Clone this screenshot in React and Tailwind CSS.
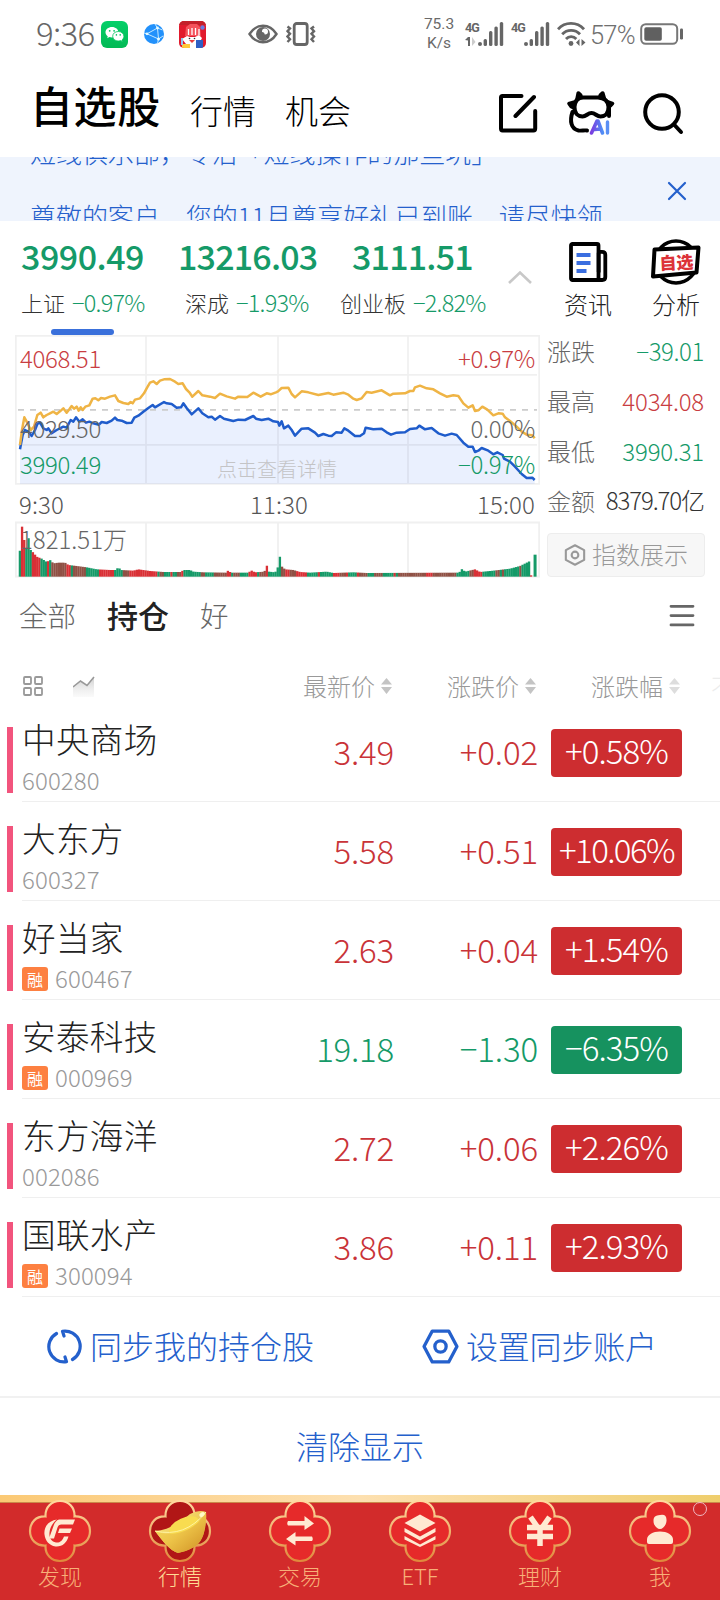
import React from "react";

const GREEN = "#159a68";

/* ---------- chart data (units: thirds of a pixel) ---------- */
const AVERAGE =
  "60,375 66,330 73,292 80,305 92,330 102,320 112,285 122,278 130,292 140,285 150,280 160,275 170,282 180,274 190,265 200,278 208,268 215,258 222,266 230,260 236,272 242,262 248,270 256,260 268,256 278,236 286,235 295,241 303,234 315,236 330,230 345,226 355,243 370,249 385,252 392,246 398,250 405,239 420,235 432,220 440,205 450,188 460,184 470,192 480,182 492,178 510,177 525,185 535,192 548,190 558,207 568,217 577,230 595,213 607,226 630,230 645,234 660,221 680,229 705,236 715,230 742,231 760,218 782,230 800,220 812,223 828,217 834,214 845,204 865,203 875,222 885,232 905,214 925,217 955,225 985,219 1000,224 1030,218 1045,224 1060,236 1070,240 1085,235 1100,216 1115,218 1145,211 1170,226 1180,221 1215,220 1230,213 1240,213 1245,202 1260,197 1280,205 1300,208 1320,220 1340,230 1360,226 1375,228 1390,250 1405,263 1418,256 1425,273 1435,271 1447,260 1462,269 1480,286 1495,280 1508,281 1515,292 1530,303 1550,320 1565,335 1580,344 1597,346 1604,355";
const PRICE =
  "60,388 68,345 75,330 85,335 95,348 105,330 112,312 120,308 130,325 140,330 145,325 155,340 170,330 190,320 200,323 212,300 220,305 228,292 238,305 248,298 258,308 268,305 280,310 297,314 305,306 320,309 335,302 345,293 352,300 365,302 380,309 395,308 403,293 415,287 430,275 445,264 458,255 465,262 492,246 500,250 515,252 530,263 543,262 550,250 560,264 575,283 595,265 607,280 625,292 635,290 645,299 660,288 672,296 700,303 715,299 735,300 760,288 768,296 785,300 805,296 820,304 834,306 838,317 845,304 852,325 865,317 875,330 885,347 905,326 925,325 945,338 955,348 970,342 985,347 995,348 1008,337 1025,338 1033,325 1045,332 1065,348 1080,348 1092,340 1097,323 1120,328 1145,326 1160,337 1173,344 1190,338 1215,337 1230,327 1250,325 1258,317 1275,328 1295,324 1315,340 1335,347 1355,341 1370,345 1390,368 1405,380 1418,380 1425,396 1435,392 1445,384 1465,392 1480,403 1492,397 1508,405 1512,416 1530,425 1545,440 1565,462 1580,474 1597,473 1604,480";

const ENVELOPE = [
  [57, 50], [66, 150], [73, 107], [79, 85], [85, 118], [92, 80], [100, 72], [110, 60], [125, 54], [140, 44],
  [150, 50], [160, 40], [175, 42], [195, 42], [205, 35], [230, 32], [260, 28], [290, 22], [330, 20], [348, 20],
  [355, 29], [362, 20], [400, 18], [415, 22], [450, 17], [490, 14], [543, 14], [550, 20], [570, 20], [580, 15],
  [610, 13], [678, 12], [685, 19], [692, 12], [743, 12], [755, 18], [765, 13], [793, 15], [801, 34], [807, 15],
  [825, 13], [832, 22], [839, 62], [846, 30], [855, 22], [880, 20], [900, 14], [930, 12], [980, 15], [1000, 11],
  [1060, 13], [1100, 11], [1377, 12], [1386, 23], [1395, 15], [1425, 22], [1440, 14], [1480, 18], [1530, 24],
  [1560, 32], [1588, 46],
];
const heightAt = (x) => {
  for (let i = 1; i < ENVELOPE.length; i++) {
    const [x1, h1] = ENVELOPE[i];
    const [x0, h0] = ENVELOPE[i - 1];
    if (x <= x1) return h0 + ((h1 - h0) * (x - x0)) / (x1 - x0);
  }
  return 46;
};
const RED_RANGES = [
  [62, 78], [96, 120], [142, 146], [200, 215], [300, 345], [388, 475], [512, 520], [545, 552], [680, 690],
  [745, 770], [796, 806], [858, 870], [888, 922], [1000, 1015], [1070, 1078], [1180, 1190], [1280, 1295],
  [1420, 1445], [955, 962], [1038, 1045],
];
const MIXED_RANGES = [
  [155, 198], [218, 255], [370, 386], [478, 492], [528, 543], [600, 615], [640, 680], [700, 722], [780, 795],
  [843, 857], [870, 886], [1015, 1036], [1080, 1100], [1125, 1145], [1195, 1275], [1300, 1370], [1410, 1420],
  [1484, 1496], [1505, 1512], [1558, 1566],
];
const within = (ranges, x) => ranges.some(([a, b]) => x >= a && x <= b);
const BARS = [];
for (let x = 59.5; x < 1590; x += 6.5) {
  BARS.push({ x, h: heightAt(x), c: within(RED_RANGES, x) ? "#d93036" : within(MIXED_RANGES, x) ? "#8f5145" : GREEN });
}
BARS.push({ x: 1593, h: 4, c: "#d93036" }, { x: 1604, h: 66, c: GREEN });

const STOCKS = [
  { name: "中央商场", code: "600280", price: "3.49", diff: "+0.02", pct: "+0.58%" },
  { name: "大东方", code: "600327", price: "5.58", diff: "+0.51", pct: "+10.06%", wide: true },
  { name: "好当家", code: "600467", price: "2.63", diff: "+0.04", pct: "+1.54%", margin: true },
  { name: "安泰科技", code: "000969", price: "19.18", diff: "−1.30", pct: "−6.35%", margin: true, down: true },
  { name: "东方海洋", code: "002086", price: "2.72", diff: "+0.06", pct: "+2.26%" },
  { name: "国联水产", code: "300094", price: "3.86", diff: "+0.11", pct: "+2.93%", margin: true },
];

/* ---------- status bar ---------- */
function Signal() {
  return (
    <svg width="26" height="24" viewBox="0 0 26 24" fill="#666">
      <circle cx="2" cy="22" r="2" />
      <rect x="5.6" y="17" width="3.4" height="7" rx="1.5" />
      <rect x="11" y="9" width="3.4" height="15" rx="1.5" />
      <rect x="16.4" y="4.5" width="3.4" height="19.5" rx="1.5" />
      <rect x="21.8" y="0" width="3.4" height="24" rx="1.5" />
    </svg>
  );
}

function StatusBar() {
  return (
    <div className="flex h-[68px] shrink-0 items-center pl-[36px] text-[#666]">
      <div className="-mt-[4px] w-[65px] shrink-0 whitespace-nowrap text-[33px] font-light leading-[40px] tracking-[-0.7px]">9:36</div>
      <svg width="27" height="27" viewBox="0 0 27 27">
        <defs>
          <linearGradient id="wx" x1="0" y1="0" x2="0" y2="1">
            <stop offset="0" stopColor="#05d069" />
            <stop offset="1" stopColor="#03b955" />
          </linearGradient>
        </defs>
        <rect width="27" height="27" rx="6" fill="url(#wx)" />
        <path d="M11 6c-3.700 0-6.500 2.300-6.500 5.300 0 1.700.9 3.100 2.300 4.100l-.6 1.900 2.200-1.200c.8.200 1.600.4 2.600.4 3.600 0 6.400-2.300 6.400-5.200S14.600 6 11 6z" fill="#fff" />
        <path d="M17.300 10.500c-3.200 0-5.600 2-5.600 4.700s2.400 4.800 5.600 4.800c.8 0 1.500-.1 2.200-.4l1.900 1.100-.5-1.700c1.200-.9 2-2.200 2-3.700 0-2.700-2.500-4.800-5.600-4.800z" fill="#fff" stroke="#04c35e" strokeWidth=".8" />
        <g fill="#04c35e"><circle cx="8.700" cy="9.800" r=".9" /><circle cx="13.100" cy="9.800" r=".9" /><circle cx="15.400" cy="13.900" r=".8" /><circle cx="19.200" cy="13.900" r=".8" /></g>
      </svg>
      <svg width="20" height="20" viewBox="0 0 20 20" className="ml-[16px]">
        <circle cx="10" cy="10" r="10" fill="#2291fb" />
        <path d="M13.500 4L3 9.800 14.500 15zM13.500 4L11 0M14.500 15l4.500-3M14.500 15l-1 4.500M3 9.800L0 9M13.500 4l5 2" fill="none" stroke="#c4e8ff" strokeWidth="1" />
        <g fill="#e6fbff"><circle cx="13.500" cy="4" r="1.400" /><circle cx="3" cy="9.800" r="1.400" /><circle cx="14.500" cy="15" r="1.500" /></g>
      </svg>
      <svg width="27" height="27" viewBox="0 0 27 27" className="ml-[15px]">
        <defs><clipPath id="appclip"><rect width="27" height="27" rx="5" /></clipPath></defs>
        <g clipPath="url(#appclip)">
          <rect width="27" height="27" fill="#e11a2d" />
          <path d="M0 0h27v4H0z" fill="#c3202a" />
          <path d="M6 15l1-9 4-3h7l3 3 1 9z" fill="#f4525b" />
          <path d="M9.500 8v6M13 7v7M16.500 7v7M20 8v6" stroke="#fff" strokeWidth="1.300" />
          <circle cx="23.500" cy="6.500" r="2.200" fill="#6a7be0" />
          <path d="M3 18l5-3 3 1h5l4-2 3 3-3 6H7z" fill="#fff" />
          <path d="M10 19h6l-3 3z" fill="#e53b3b" />
          <circle cx="10.500" cy="17.500" r=".8" fill="#333" /><circle cx="15.500" cy="17.500" r=".8" fill="#333" />
          <rect x="3" y="23" width="8" height="4" fill="#ffc93a" />
          <rect x="11" y="23" width="6" height="4" fill="#fff" />
          <rect x="17" y="19" width="7" height="8" fill="#2f5fc4" />
          <rect x="2" y="17" width="2" height="7" fill="#8fc7ee" />
        </g>
      </svg>
      <svg width="30" height="20" viewBox="0 0 30 20" className="ml-[42px]">
        <path d="M1.500 10C5 4.500 9.700 1.800 15 1.800S25 4.500 28.500 10C25 15.500 20.300 18.200 15 18.200S5 15.500 1.500 10z" fill="none" stroke="#666" strokeWidth="2.400" />
        <circle cx="15" cy="10" r="7" fill="#666" />
        <circle cx="17" cy="7.600" r="3" fill="#fff" />
        <circle cx="14" cy="10.500" r="2.600" fill="#666" />
      </svg>
      <svg width="30" height="24" viewBox="0 0 30 24" className="ml-[8px]" fill="none" stroke="#666">
        <rect x="8.200" y="1.500" width="13" height="21" rx="2.500" strokeWidth="2.800" />
        <path d="M1.500 4.500L4 6.500 1.500 9.200 4 11.800 1.500 14.500 4 17.200 1.500 20M28 4.500L25.500 6.500 28 9.200 25.500 11.800 28 14.500 25.500 17.200 28 20" strokeWidth="2.400" />
      </svg>
      <div className="ml-[107px] w-[32px] text-center text-[15.5px] leading-[19px] text-[#6a6a6a]">
        <div className="font-['Roboto','Noto_Sans_CJK_SC',sans-serif]">75.3</div>
        <div className="font-['Roboto','Noto_Sans_CJK_SC',sans-serif]">K/s</div>
      </div>
      <div className="ml-[10px] flex items-start">
        <div className="w-[13px] font-['Roboto',sans-serif] text-[12.5px] font-bold leading-[12px] tracking-[-1px]">
          4G
          <svg width="11" height="9" viewBox="0 0 11 9" className="mt-[3px]">
            <path d="M0 3l3-3h2v9H3V3.500z" fill="#666" />
            <path d="M7 0v9l3.500-4z" fill="#ccc" />
          </svg>
        </div>
        <Signal />
      </div>
      <div className="ml-[7px] flex items-start">
        <div className="w-[13px] font-['Roboto',sans-serif] text-[12.5px] font-bold leading-[12px] tracking-[-1px]">4G</div>
        <Signal />
      </div>
      <svg width="29" height="25" viewBox="0 0 29 25" className="ml-[7px] shrink-0" fill="none" stroke="#666" strokeWidth="2.800">
        <path d="M1 7.200C8-.5 20-.5 27 7.200M5.200 12.200c4.800-5.200 13-5.200 17.800 0M9 17c2.900-3.200 7.400-3.200 10.300 0" />
        <circle cx="14" cy="21.500" r="2.400" fill="#666" stroke="none" />
        <path d="M22.500 17v7l-3.500-3.500zM24.500 17v7l4-3.500z" fill="#666" stroke="none" />
      </svg>
      <div className="ml-[4px] mt-[2px] w-[50px] shrink-0 whitespace-nowrap font-['Roboto','Noto_Sans_CJK_SC',sans-serif] text-[25.5px] font-light leading-[30px] tracking-[-0.8px] text-[#707070]">57%</div>
      <svg width="44" height="22" viewBox="0 0 44 22" className="shrink-0">
        <rect x="1.200" y="1.200" width="36" height="19.600" rx="4.500" fill="none" stroke="#777" strokeWidth="2" />
        <rect x="4.300" y="4.300" width="17.500" height="13.400" rx="1.800" fill="#606060" />
        <rect x="40" y="5.500" width="3" height="11" rx="1.200" fill="#666" />
      </svg>
    </div>
  );
}

/* ---------- header ---------- */
function Header() {
  return (
    <div className="flex h-[89px] shrink-0 items-start pl-[32px] text-black">
      <div className="w-[158px] shrink-0 whitespace-nowrap pt-[5px] text-[43px] font-medium leading-[62px] tracking-[0.6px]"><span className="-ml-[2px]">自选股</span></div>
      <div className="w-[95px] whitespace-nowrap pt-[12px] text-[33px] font-light leading-[60px]">行情</div>
      <div className="w-[213px] whitespace-nowrap pt-[12px] text-[33px] font-light leading-[60px]">机会</div>
      <svg width="40" height="40" viewBox="0 0 40 40" className="mt-[25px]" fill="none" stroke="#000" strokeWidth="4" strokeLinecap="round" strokeLinejoin="round">
        <path d="M23.500 3H4.500Q3 3 3 4.500v31Q3 37.500 4.500 37.500h31q1.700 0 1.700-2V18M17.500 23L36 4" />
      </svg>
      <svg width="50" height="46" viewBox="0 0 50 46" className="ml-[28px] mt-[22px]" fill="none">
        <defs>
          <linearGradient id="ai" x1="0" y1="0" x2="1" y2="0">
            <stop offset="0" stopColor="#7a3fe0" />
            <stop offset="1" stopColor="#4f8df5" />
          </linearGradient>
        </defs>
        <path d="M9 10L10.500 2.500Q11.500.5 13.500 1.500q2.500 1.500 3.500 5h15q1-3.500 3.500-5 2-1 3 1L40.500 9.500 47.500 12q1.500 1 .5 2.500-2 3-6 5H7Q3 18 1.500 14.500.500 13 2 12z" fill="#000" />
        <path d="M17 7.500h15Q42 8 42.500 17c0 8-5 9.500-8 9.500-4 0-5-3.500-9-3.500s-5 3.500-9 3.500c-4 0-8-2.500-8-9.500Q9 8 17 7.500z" fill="#fff" stroke="#000" strokeWidth="4" />
        <path d="M6.500 22c-3 9-1.500 17 6 18.500 3 .5 6-.5 8.500 0M43 17v9" stroke="#000" strokeWidth="4" strokeLinecap="round" />
        <path d="M25.500 43l5.500-12h1L36.500 43M28.500 39.500l6-.5" stroke="url(#ai)" strokeWidth="3.600" strokeLinejoin="round" strokeLinecap="round" />
        <path d="M41.500 32v11" stroke="#5a8ff5" strokeWidth="3.400" strokeLinecap="round" />
      </svg>
      <svg width="42" height="43" viewBox="0 0 42 43" className="ml-[26px] mt-[24px]" fill="none" stroke="#000" strokeWidth="4" strokeLinecap="round">
        <circle cx="20" cy="20" r="16.800" />
        <path d="M32 32.500l7 7.500" />
      </svg>
    </div>
  );
}

function Banner() {
  return (
    <div className="flex h-[64px] shrink-0 overflow-hidden bg-[#eff4fd] pl-[30px] text-[26px] font-light leading-[64px] text-[#2460cc]">
      <div className="-mt-[37px] w-[634px] whitespace-nowrap">
        <div className="tracking-[-0.05px]">短线俱乐部，专治「短线操作的那些坑」</div>
        <div className="tracking-[-0.05px]">尊敬的客户，您的11月尊享好礼已到账，请尽快领</div>
      </div>
      <svg width="22" height="22" viewBox="0 0 22 22" className="ml-[2px] mt-[23px]" stroke="#2460cc" strokeWidth="2.200" strokeLinecap="round">
        <path d="M3 3l16 16M19 3L3 19" />
      </svg>
    </div>
  );
}

/* ---------- indices ---------- */
function IndexCell({ value, label, pct, box, valueCls }) {
  return (
    <div className={"shrink-0 " + box}>
      <div className={"whitespace-nowrap text-[34px] font-medium leading-[40px] text-[#159a68] " + valueCls}>{value}</div>
      <div className="mt-[10px] flex items-center whitespace-nowrap text-[22px] font-light leading-[32px] text-[#333]">
        {label}
        <span className="ml-[7px] text-[23.5px] tracking-[-0.8px] text-[#159a68]">{pct}</span>
      </div>
    </div>
  );
}

function Indices() {
  return (
    <div className="flex h-[114px] shrink-0 flex-col">
      <div className="flex h-[108px] items-start pt-[15px]">
        <IndexCell value="3990.49" label="上证" pct="−0.97%" box="w-[165px] pl-[21px]" valueCls="tracking-[-0.5px]" />
        <IndexCell value="13216.03" label="深成" pct="−1.93%" box="w-[155px] pl-[20px]" valueCls="-ml-[7px] tracking-[-0.8px]" />
        <IndexCell value="3111.51" label="创业板" pct="−2.82%" box="w-[188px] pl-[20px]" valueCls="ml-[12px] tracking-[-0.8px]" />
        <svg width="24" height="14" viewBox="0 0 24 14" className="mt-[34px] shrink-0" fill="none" stroke="#c8c8c8" strokeWidth="2.600">
          <path d="M1 13L12 2.500 23 13" />
        </svg>
        <div className="ml-[32px] flex w-[48px] flex-col items-center">
          <svg width="40" height="42" viewBox="0 0 40 42" className="mt-[5px]" fill="none" stroke="#000" strokeWidth="3.800">
            <path d="M31 10.800h3q3.300 0 3.300 3V36q0 3-3 3H24" />
            <rect x="3" y="3" width="27.500" height="36" rx="1.500" fill="#fff" />
            <path d="M30.700 12v18.500" strokeLinecap="round" />
            <path d="M8.500 14h14M8.500 22h14M8.500 30h10" stroke="#3a6ee0" strokeWidth="4" />
          </svg>
          <div className="mt-[5px] whitespace-nowrap text-[24px] font-light leading-[32px] text-[#222]">资讯</div>
        </div>
        <div className="ml-[38px] flex w-[52px] flex-col items-center">
          <div className="relative mt-[3px] h-[49px] w-[50px]">
            <svg width="50" height="46" viewBox="0 0 50 46" className="absolute inset-0" fill="none" stroke="#000">
              <circle cx="25" cy="23" r="21" strokeWidth="3.500" />
              <path d="M3.500 10.500L47.500 8.500 45.500 33.500 2 37.500z" fill="#fff" strokeWidth="4" strokeLinejoin="round" />
            </svg>
            <div className="relative -rotate-3 pt-[13px] text-center text-[17px] font-black leading-[20px] text-[#dc3238]">自选</div>
          </div>
          <div className="whitespace-nowrap text-[24px] font-light leading-[32px] text-[#222]">分析</div>
        </div>
      </div>
      <div className="ml-[51px] h-[6px] w-[63px] rounded-full bg-[#3a70db]" />
    </div>
  );
}

const chartText = "absolute whitespace-nowrap text-[24px] font-light leading-[30px] tracking-[-0.3px] ";

function Charts() {
  return (
    <div className="flex w-[525px] shrink-0 flex-col">
      <div className="relative h-[151px]">
        <svg width="525" height="151" viewBox="45 45 1575 453" className="absolute inset-0" fill="none">
          <polygon points={PRICE + " 1604,491 60,491"} fill="#eaf0fe" />
          <path d="M47.500 47.500H1617.500V491.500H47.500zM54 164.500H1611M54 374.500H1611M438 48V491M834 48V491M1224 48V491" stroke="#000" strokeOpacity=".06" strokeWidth="5.500" />
          <path d="M54 269.500H1611" stroke="#ccc" strokeWidth="5" strokeDasharray="18 18" />
        </svg>
        <svg width="525" height="151" viewBox="45 45 1575 453" className="absolute inset-0" fill="none" strokeWidth="7.500" strokeLinejoin="round">
          <polyline points={PRICE} stroke="#1f5ccb" />
          <polyline points={AVERAGE} stroke="#efb445" />
        </svg>
        <span className={chartText + "left-[5px] top-[8px] text-[#c93d42]"}>4068.51</span>
        <span className={chartText + "left-[5px] top-[78px] text-[#666]"}>4029.50</span>
        <span className={chartText + "left-[5px] top-[114px] text-[#159a68]"}>3990.49</span>
        <span className={chartText + "right-[5px] top-[8px] text-[#c93d42]"}>+0.97%</span>
        <span className={chartText + "right-[5px] top-[78px] text-[#666]"}>0.00%</span>
        <span className={chartText + "right-[5px] top-[114px] text-[#159a68]"}>−0.97%</span>
        <span className="absolute left-[202px] top-[119px] whitespace-nowrap text-[20px] font-light leading-[30px] text-[#c4c4c6]">点击查看详情</span>
      </div>
      <div className="flex h-[36px] items-center justify-between pl-[4px] pr-[5px] pt-[1px] text-[24px] font-light tracking-[0.1px] text-[#555]">
        <span>9:30</span>
        <span className="ml-[17px]">11:30</span>
        <span>15:00</span>
      </div>
      <div className="relative h-[57px]">
        <svg width="525" height="57" viewBox="45 604 1575 171" className="absolute inset-0">
          <path d="M47.500 608.500H1617.500V770.500H47.500zM438 608V770M834 608V770M1224 608V770" fill="none" stroke="#f0f0f0" strokeWidth="5.500" />
          {BARS.map((b, i) => (
            <rect key={i} x={b.x - 3.3} y={771 - b.h} width={b.x > 1600 ? 9 : 7} height={b.h} fill={b.c} />
          ))}
        </svg>
        <span className="absolute left-[5px] top-[3px] whitespace-nowrap text-[24px] font-light leading-[30px] text-[#666]">1821.51万</span>
      </div>
    </div>
  );
}

function Stat({ label, value, cls }) {
  return (
    <div className="flex h-[50px] items-center justify-between whitespace-nowrap text-[24px] font-light leading-[30px] text-[#666]">
      <span>{label}</span>
      <span className={cls}>{value}</span>
    </div>
  );
}

function Hexagon({ size, stroke, width, cls }) {
  return (
    <svg width={size} height={size} viewBox="0 0 36 36" className={cls} fill="none" stroke={stroke} strokeWidth={width} strokeLinejoin="round">
      <path d="M10 3h16l8 15-8 15H10L2 18z" />
      <circle cx="18" cy="18" r="5.500" />
    </svg>
  );
}

function MarketPanel() {
  return (
    <div className="flex h-[243px] shrink-0 pl-[15px]">
      <Charts />
      <div className="ml-[7px] flex w-[158px] flex-col">
        <div className="-mt-[9px] flex flex-col pr-[1px]">
          <Stat label="涨跌" value="−39.01" cls="tracking-[-0.4px] text-[#159a68]" />
          <Stat label="最高" value="4034.08" cls="tracking-[-0.2px] text-[#c93d42]" />
          <Stat label="最低" value="3990.31" cls="tracking-[-0.2px] text-[#159a68]" />
          <Stat label="金额" value="8379.70亿" cls="-mt-[2px] tracking-[-1.1px] text-[#333]" />
        </div>
        <div className="mt-[7px] flex h-[44px] items-center justify-center rounded-[4px] border border-[#ededed] bg-[#f7f7f7] pb-[2px] text-[24px] font-light text-[#999]">
          <Hexagon size={22} stroke="#999" width={3.4} cls="mr-[6px] mt-[1px] rotate-90" />
          指数展示
        </div>
      </div>
    </div>
  );
}

/* ---------- watch list ---------- */
function Tabs() {
  return (
    <div className="flex h-[78px] shrink-0 items-center whitespace-nowrap pb-[3px] pl-[19px] pr-[25px] text-[#666]">
      <span className="w-[88px] text-[28.5px] font-light">全部</span>
      <span className="w-[93px] text-[31px] font-medium text-[#222]">持仓</span>
      <span className="text-[28.5px] font-light">好</span>
      <svg width="26" height="24" viewBox="0 0 26 24" className="ml-auto mt-[1px]" stroke="#666" strokeWidth="2.800" strokeLinecap="round">
        <path d="M2 2.300h22M2 11.600h22M2 20.900h22" />
      </svg>
    </div>
  );
}

function Sort({ faded }) {
  return (
    <svg width="11" height="16" viewBox="0 0 11 16" className="ml-[6px] shrink-0" fill={faded ? "#ddd" : "#c4c4c4"}>
      <path d="M5.500 0L11 6.500H0zM5.500 16L11 9H0z" />
    </svg>
  );
}

function ColumnHeads() {
  return (
    <div className="flex h-[47px] shrink-0 items-center overflow-hidden whitespace-nowrap pl-[23px] pt-[13px] text-[24px] font-light leading-[30px] text-[#999]">
      <svg width="20" height="20" viewBox="0 0 20 20" className="shrink-0" fill="none" stroke="#999" strokeWidth="1.800">
        <rect x="1" y="1" width="7" height="7" rx="1" /><rect x="12" y="1" width="7" height="7" rx="1" />
        <rect x="1" y="12" width="7" height="7" rx="1" /><rect x="12" y="12" width="7" height="7" rx="1" />
      </svg>
      <svg width="22" height="21" viewBox="0 0 22 21" className="ml-[30px] shrink-0">
        <defs>
          <linearGradient id="fade" x1="0" y1="0" x2="0" y2="1">
            <stop offset="0" stopColor="#bbb" stopOpacity=".7" />
            <stop offset="1" stopColor="#ddd" stopOpacity=".15" />
          </linearGradient>
        </defs>
        <path d="M0 11L7.500 5l6.500 4.500L21 1v20H0z" fill="url(#fade)" />
        <path d="M0 11L7.500 5l6.500 4.500L21 1" fill="none" stroke="#999" strokeWidth="1.600" />
      </svg>
      <div className="flex w-[297px] shrink-0 items-center justify-end">最新价<Sort /></div>
      <div className="flex w-[144px] shrink-0 items-center justify-end">涨跌价<Sort /></div>
      <div className="flex w-[144px] shrink-0 items-center justify-end">涨跌幅<Sort faded /></div>
      <div className="ml-[31px] w-[24px] shrink-0 text-[#ececec]">不</div>
    </div>
  );
}

function StockRow({ s }) {
  return (
    <div className="flex h-[99px] shrink-0 pl-[7px]">
      <div className="mt-[24px] h-[66px] w-[6px] bg-[#f2547d]" />
      <div className="ml-[9px] flex flex-1 items-start border-b border-[#efefef]">
        <div className="w-[200px] whitespace-nowrap pt-[13px]">
          <div className="text-[33.6px] font-light leading-[46px] tracking-[0.3px] text-[#222]">{s.name}</div>
          <div className="mt-[3px] flex items-center text-[24px] font-light leading-[30px] tracking-[0.1px] text-[#999]">
            {s.margin && (
              <span className="mr-[7px] mt-[1px] flex h-[24px] w-[26px] items-center justify-center rounded-[3px] bg-[#fd8041] text-[16px] font-normal leading-[22px] tracking-normal text-white">融</span>
            )}
            {s.code}
          </div>
        </div>
        <div className={"mt-[25px] w-[172px] text-right text-[33px] font-light leading-[46px] tracking-[-0.2px] " + (s.down ? "text-[#159a68]" : "text-[#c93338]")}>{s.price}</div>
        <div className={"mt-[25px] w-[144px] text-right text-[33px] font-light leading-[46px] tracking-[-0.1px] " + (s.down ? "text-[#159a68]" : "text-[#c93338]")}>{s.diff}</div>
        <div className={"ml-[13px] mt-[26px] h-[48px] w-[131px] whitespace-nowrap rounded-[4px] text-center text-[33px] font-light leading-[43px] text-white " + (s.wide ? "tracking-[-1.6px] " : "tracking-[-0.9px] ") + (s.down ? "bg-[#16925f]" : "bg-[#cd2d30]")}>{s.pct}</div>
      </div>
    </div>
  );
}

function Actions() {
  return (
    <div className="flex h-[198px] shrink-0 flex-col whitespace-nowrap text-[32px] font-light text-[#2460cc]">
      <div className="flex h-[101px] shrink-0 items-center border-b-2 border-[#f1f1f1] pl-[47px]">
        <svg width="35" height="35" viewBox="0 0 35 35" fill="none" stroke="#2460cc" strokeWidth="3.200" strokeLinecap="round" strokeLinejoin="round">
          <path d="M9.500 4.500A15.200 15.200 0 0 0 19.500 32.700L18 28" />
          <path d="M25.500 30.500A15.200 15.200 0 0 0 15.500 2.300L17 7" />
        </svg>
        <span className="-mt-[4px] ml-[8px] w-[332px]">同步我的持仓股</span>
        <Hexagon size={37} stroke="#2460cc" width={3.2} cls="" />
        <span className="-mt-[4px] ml-[7px] tracking-[-0.2px]">设置同步账户</span>
      </div>
      <div className="flex h-[97px] items-center justify-center pb-[3px]">清除显示</div>
    </div>
  );
}

/* ---------- bottom navigation ---------- */
const GLYPHS = {
  discover: (
    <g fill="#ffead2">
      <path d="M29 20.500c-8 1-13.500 7-12.500 15 .7 6 4.500 11 11 12 7 .5 11-3.500 13-10h-4.500c-1.500 4-4 6.500-8 6-5-1-7-5-6.500-10 .5-5.500 3.500-10 7.500-13z" />
      <path d="M31 20.500h16l-2 5H33q-2.500 0-3.500 3L26 39.500h-5L25.500 27q1.700-5.500 5.500-6.500zM31.500 29.500H44l-2 4.500H30z" />
    </g>
  ),
  trade: (
    <g fill="#ffead2">
      <path d="M20 22h16.500v-5L46 24.500 36.500 31v-4.500H20q-1.500-2 0-4.500zM44 37.500H27.500V33L18 40l9.500 6.500V42H44q1.500-2 0-4.500z" />
    </g>
  ),
  etf: (
    <g fill="#ffead2">
      <path d="M32 15.500L47.500 24 32 32.500 16.500 24z" />
      <path d="M16.500 29L32 37.500 47.500 29v4L32 41.500 16.500 33zM16.500 37L32 45.500 47.500 37v3.500L32 48 16.500 40.500z" />
    </g>
  ),
  wealth: <path d="M22.500 18l7 10M41.500 18l-7 10M19 28.500h26M19 37.500h26M32 28.500v18.500" fill="none" stroke="#ffead2" strokeWidth="5.500" />,
  me: (
    <g fill="#ffead2">
      <path d="M32 16q7-1.500 6.500 6c-.5 4.500-3.500 8-6.500 8s-6.500-3.500-6.500-8 2-5.500 6.500-6z" />
      <path d="M19 43v-2.500c0-4.500 6-8 13-8s13 3.500 13 8V43q0 2-2 2H21q-2 0-2-2z" />
    </g>
  ),
};

function NavIcon({ kind }) {
  const active = kind === "market";
  return (
    <svg width="64" height="64" viewBox="0 0 64 64">
      <path
        d="M17.500 17.500C17 8 23.500 2 32 2S47 8 46.500 17.500C56 17 62 23.500 62 32S56 47 46.500 46.500C47 56 40.500 62 32 62S17 56 17.500 46.500C8 47 2 40.500 2 32S8 17 17.500 17.500z"
        fill={active ? "#b11616" : "#e62a2a"}
        stroke="url(#gold)"
        strokeWidth="2.200"
      />
      {active ? (
        <g>
          <path d="M7 32C22 31 34 22 42 15q10-5 16-2c1 8-1 20-4 26-3 8-14 13-24 15-8-2-16-13-23-22z" fill="url(#ingot)" />
          <ellipse cx="36" cy="27" rx="16" ry="8" transform="rotate(-24 36 27)" fill="#f8dc50" />
          <path d="M7 32C24 39 47 33 58 13c0 8-1 20-4 26-3 8-14 13-24 15-8-2-16-13-23-22z" fill="url(#bowl)" />
          <path d="M7 32q30 7 51-19" fill="none" stroke="#fff3a0" strokeWidth="1" />
          <ellipse cx="54" cy="15.500" rx="3" ry="2" transform="rotate(-35 54 15.500)" fill="#fffac8" />
        </g>
      ) : (
        GLYPHS[kind]
      )}
    </svg>
  );
}

const NAV = [
  ["discover", "发现"],
  ["market", "行情"],
  ["trade", "交易"],
  ["etf", "ETF"],
  ["wealth", "理财"],
  ["me", "我"],
];

function BottomNav() {
  return (
    <div className="relative flex h-[105px] shrink-0 flex-col bg-[#d22b2b]">
      <svg width="0" height="0" className="absolute">
        <defs>
          <linearGradient id="gold" x1="0" y1="0" x2="0" y2="1">
            <stop offset="0" stopColor="#ffd9a0" />
            <stop offset="1" stopColor="#e0893c" />
          </linearGradient>
          <linearGradient id="ingot" x1="0" y1="0" x2="1" y2="1">
            <stop offset="0" stopColor="#fdf08a" />
            <stop offset="1" stopColor="#e0a72c" />
          </linearGradient>
          <linearGradient id="bowl" x1="0" y1="0" x2="1" y2="1">
            <stop offset="0" stopColor="#f7e267" />
            <stop offset=".5" stopColor="#edc448" />
            <stop offset="1" stopColor="#cf8f24" />
          </linearGradient>
        </defs>
      </svg>
      <div className="h-[8px] border-b border-[#c98a4a] bg-linear-to-r from-[#fbc974] via-[#fde0b0] to-[#efce6c]" />
      <div className="-mt-[4px] grid grid-cols-6">
        {NAV.map(([kind, label]) => (
          <div key={kind} className="flex flex-col items-center">
            <NavIcon kind={kind} />
            <div className={"-mt-[1px] text-[22px] font-light leading-[26px] " + (kind === "market" ? "text-[#ffdc94]" : "text-[#f8b078]")}>{label}</div>
          </div>
        ))}
      </div>
      <div className="absolute right-[13px] top-[7px] h-[14px] w-[14px] rounded-full border-[1.5px] border-[#f0b9c4]" />
    </div>
  );
}

export default function App() {
  return (
    <div className="flex h-[1600px] w-[720px] flex-col overflow-hidden bg-white font-['Noto_Sans_CJK_SC',sans-serif]">
      <StatusBar />
      <Header />
      <Banner />
      <Indices />
      <MarketPanel />
      <Tabs />
      <ColumnHeads />
      {STOCKS.map((s) => (
        <StockRow key={s.code} s={s} />
      ))}
      <Actions />
      <BottomNav />
    </div>
  );
}
